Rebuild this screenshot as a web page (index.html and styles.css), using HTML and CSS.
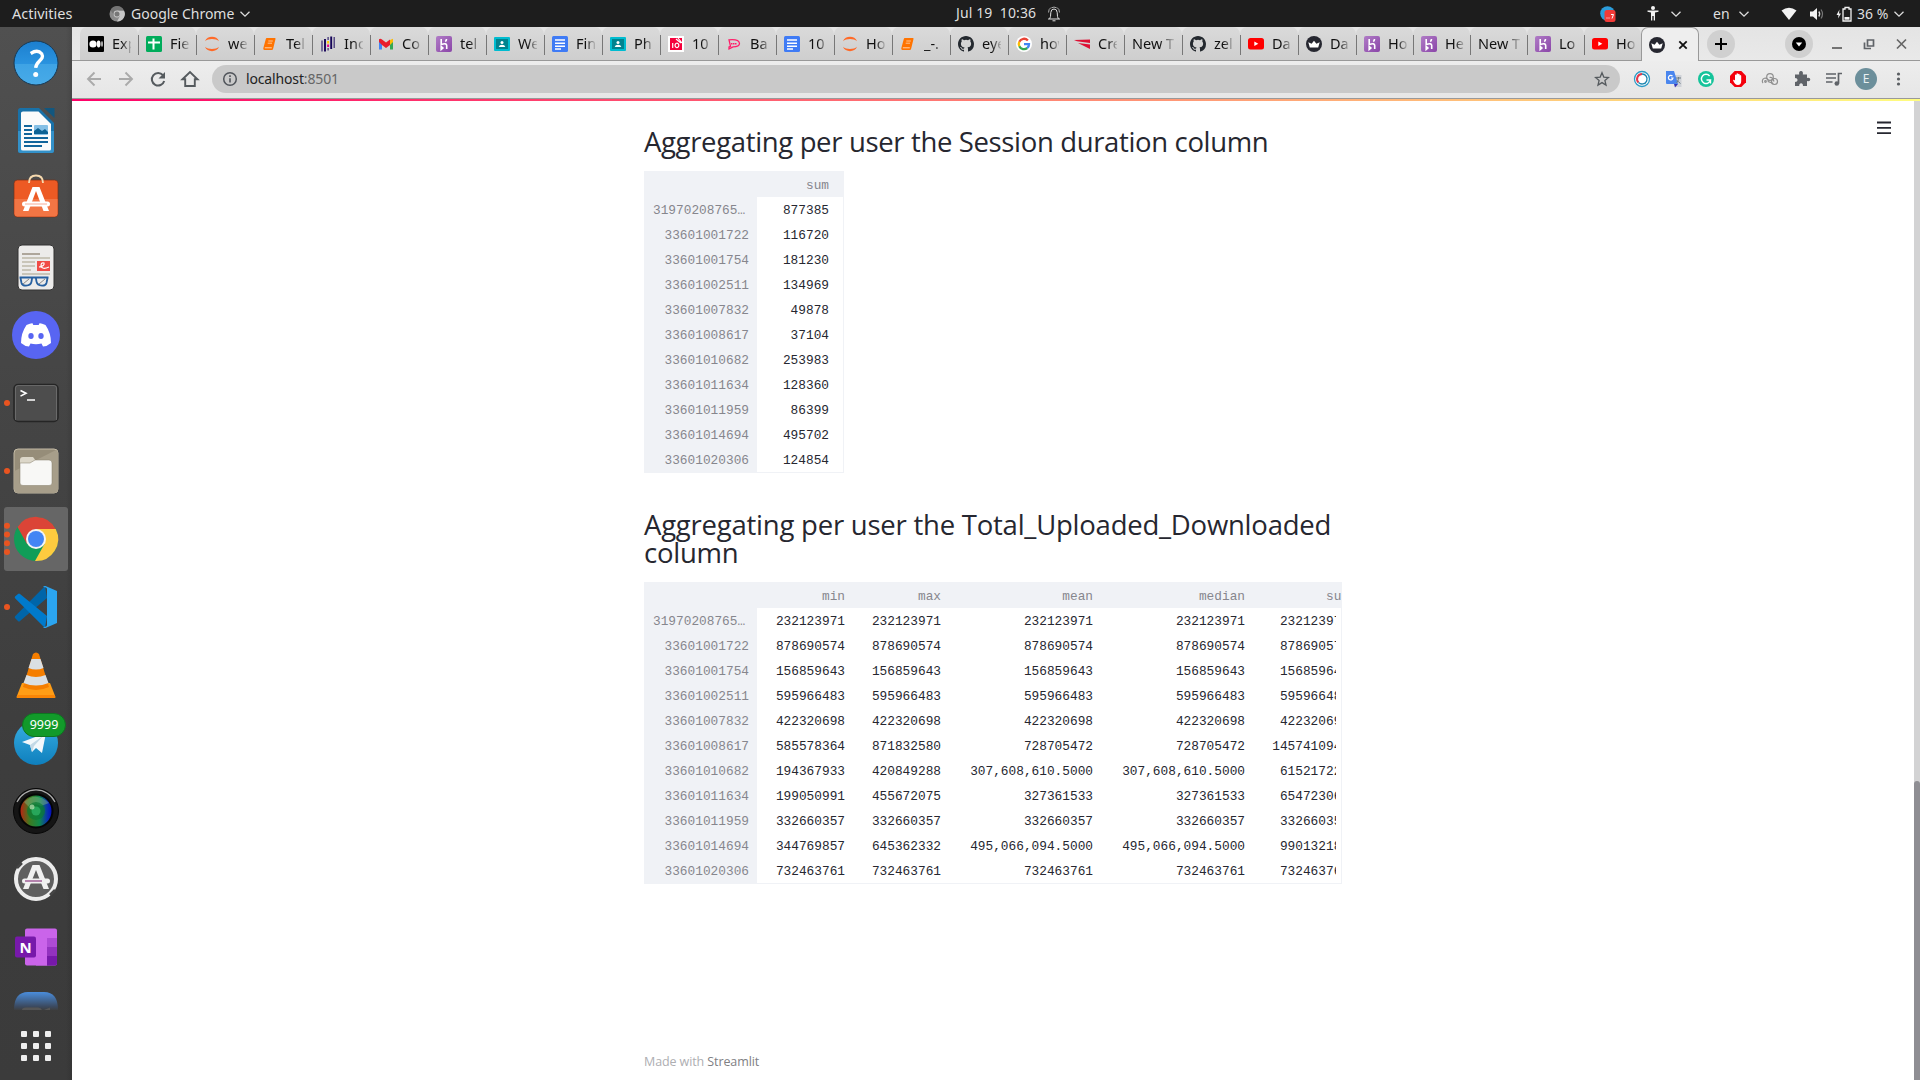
FILE: index.html
```html
<!DOCTYPE html>
<html lang="en">
<head>
<meta charset="utf-8">
<title>Streamlit</title>
<link rel="stylesheet" href="styles.css">
</head>
<body>
<svg class="defs" aria-hidden="true">
  <defs>
    <linearGradient id="blueV" x1="0" y1="0" x2="0" y2="1"><stop offset="0" stop-color="#1c7fcf"/><stop offset=".52" stop-color="#2a93df"/><stop offset=".53" stop-color="#3ea3e5"/><stop offset="1" stop-color="#48abe8"/></linearGradient>
    <linearGradient id="tele" x1="0" y1="0" x2="0" y2="1"><stop offset="0" stop-color="#37aee2"/><stop offset="1" stop-color="#0f7fbd"/></linearGradient>
    <linearGradient id="herokuG" x1="0" y1="0" x2="1" y2="1"><stop offset="0" stop-color="#b07cc6"/><stop offset="1" stop-color="#8a45a8"/></linearGradient>
    <linearGradient id="zoomG" x1="0" y1="0" x2="0" y2="1"><stop offset="0" stop-color="#4a8ddc"/><stop offset=".8" stop-color="#3b4a60"/><stop offset="1" stop-color="#3e3f41"/></linearGradient>
    <linearGradient id="lensG" x1="0" y1="0" x2="1" y2="0"><stop offset="0" stop-color="#c81a10"/><stop offset=".3" stop-color="#3f7a20"/><stop offset=".6" stop-color="#0f8a4a"/><stop offset=".85" stop-color="#0a2fb0"/><stop offset="1" stop-color="#0608c0"/></linearGradient>
  </defs>
  <symbol id="medium" viewBox="0 0 16 16"><rect width="16" height="16" rx="1"/><circle cx="5" cy="8" r="3.6" fill="#fff"/><ellipse cx="10.6" cy="8" rx="1.9" ry="3.4" fill="#fff"/><ellipse cx="14" cy="8" rx=".7" ry="3" fill="#fff"/></symbol>
  <symbol id="sheets" viewBox="0 0 16 16"><rect width="16" height="16" rx="1.5" fill="#00ac5b"/><path d="M2 6.5h12M7.5 2.5v11" stroke="#fff" stroke-width="2"/></symbol>
  <symbol id="jupyter" viewBox="0 0 16 16"><path d="M1 5.2C3 -.6 13 -.6 15 5.2C12 2.3 4 2.3 1 5.2ZM1 10.8C3 16.6 13 16.6 15 10.8C12 13.7 4 13.7 1 10.8Z" fill="#ff6a28"/></symbol>
  <symbol id="book" viewBox="0 0 16 16"><path d="M4.800 2h8q1 0 .7 1l-2.300 9.500q-.3 1.500-1.500 1.500H2.500Q1 14 1.300 12.300L3.800 3Q4 2 4.800 2Z" fill="#ff7300"/><path d="M6.300 5h4.500M5.700 7.200h4.300" fill="none" stroke="#ffd9b8" stroke-width=".8"/><path d="M2.800 11.800h7" stroke="#ffe8d4" stroke-width=".8"/></symbol>
  <symbol id="pandas" viewBox="0 0 16 16"><path d="M5 3v12.500M11.200 .5V13" stroke="#150458" stroke-width="1.900"/><path d="M8.100 1v3M8.100 12v2.500M2 4.500v11M14.200 1v11" stroke="#46387a" stroke-width="1.300"/><path d="M8.100 5v2.500" stroke="#ffca00" stroke-width="2"/><path d="M8.100 8.500V11" stroke="#e70488" stroke-width="2"/></symbol>
  <symbol id="gmail" viewBox="0 0 16 16"><path d="M1 4v9.500h3V6Z" fill="#4285f4"/><path d="M12 6v7.500h3V4Z" fill="#34a853"/><path d="M12 4l3-1.200V6l-3 3Z" fill="#fbbc04"/><path d="M1 6V3.200q1.500-1.200 3 .2L8 6.500l4-3.100V9l-4 3-4-3Z" fill="#ea1d2c"/></symbol>
  <symbol id="heroku" viewBox="0 0 16 16"><rect width="16" height="16" rx="2" fill="url(#herokuG)"/><path d="M5.200 3v5.500q5.500-1.800 5.500 1V13M10.500 3q0 1.500-1.200 2.600M5.200 10.500v3l1.700-1.500Z" fill="none" stroke="#fff" stroke-width="1.600"/></symbol>
  <symbol id="classroom" viewBox="0 0 16 16"><rect y="1" width="16" height="14" rx="1" fill="#00bcd0"/><rect x="2" y="3" width="12" height="10" fill="#00838f"/><circle cx="8" cy="6.500" r="1.500" fill="#fff"/><path d="M4.700 11q.5-2.300 3.300-2.300t3.300 2.300Z" fill="#fff"/></symbol>
  <symbol id="docs" viewBox="0 0 16 16"><rect width="16" height="16" rx="1.500" fill="#3f7bf5"/><path d="M3 4h10M3 7.300h10M3 10.300h10M3 13h6" stroke="#fff" stroke-width="1.500"/></symbol>
  <symbol id="ten" viewBox="0 0 16 16"><rect width="16" height="16" fill="#fff"/><rect x="2" y="2" width="12" height="12" fill="#f5003b"/><path d="M4.700 7v5M9 7.200a1.900 2.200 0 1 1-.1 0M8 3l5 4M10 2l4 5" fill="none" stroke="#fff" stroke-width="1.200"/></symbol>
  <symbol id="rasa" viewBox="0 0 16 16"><path d="M3 3.800q10-1 10.500 3.700-.2 3.400-6.500 3.400l-4 2V11l1.500-.7L3 3.800Z" fill="none" stroke="#ff1e6a" stroke-width="1.300"/><path d="M5 7.700h6" stroke="#ff1e6a" stroke-width="1.500" stroke-dasharray="1.500 .5"/></symbol>
  <symbol id="github" viewBox="0 0 16 16"><path fill="#24292f" d="M8 0C3.580 0 0 3.580 0 8c0 3.540 2.290 6.530 5.470 7.590.4.070.55-.17.55-.38 0-.19-.01-.82-.01-1.490-2.010.37-2.530-.49-2.690-.94-.09-.23-.48-.94-.82-1.130-.28-.15-.68-.52-.01-.53.63-.01 1.080.58 1.230.82.72 1.210 1.870.87 2.330.66.07-.52.28-.87.51-1.070-1.780-.2-3.640-.89-3.640-3.950 0-.87.31-1.590.82-2.150-.08-.2-.36-1.020.08-2.120 0 0 .67-.21 2.200.82a7.600 7.600 0 0 1 4 0c1.530-1.040 2.200-.82 2.200-.82.44 1.100.16 1.920.08 2.120.51.56.82 1.270.82 2.150 0 3.070-1.870 3.750-3.650 3.950.29.25.54.73.54 1.480 0 1.070-.01 1.930-.01 2.200 0 .21.15.46.55.38A8.010 8.010 0 0 0 16 8c0-4.420-3.580-8-8-8Z"/></symbol>
  <symbol id="google" viewBox="0 0 16 16"><circle cx="8" cy="8" r="8" fill="#fff"/><g fill="none" stroke-width="2.300"><path d="M11.900 4.500A5.200 5.200 0 0 0 3.300 5.800" stroke="#ea4335"/><path d="M3.300 5.800a5.200 5.200 0 0 0 0 4.400" stroke="#fbbc05"/><path d="M3.300 10.200a5.200 5.200 0 0 0 8 1.800" stroke="#34a853"/><path d="M11.300 12A5 5 0 0 0 13 8.200H8" stroke="#4285f4"/></g></symbol>
  <symbol id="creator" viewBox="0 0 16 16"><path d="M0 4l16-.5V7L3 5.300ZM4 7l12 1.500V13Z" fill="#dd1034"/></symbol>
  <symbol id="youtube" viewBox="0 0 16 16"><rect y="2" width="16" height="11.500" rx="2.500" fill="#f00"/><path d="M6.300 5.500v4.600l4-2.300Z" fill="#fff"/></symbol>
  <symbol id="crown" viewBox="0 0 16 16"><circle cx="8" cy="8" r="8" fill="#262730"/><path d="M2.300 6.200l3.300 1.500L8 4.700l2.400 3 3.300-1.500-1.500 5.200H3.800Z" fill="#fff"/></symbol>
  <symbol id="chev" viewBox="0 0 12 12"><path d="M1.500 3.800 6 8.200l4.500-4.400" fill="none" stroke="#dcdcdc" stroke-width="1.300"/></symbol>
</svg>

<header class="topbar">
  <span class="activities">Activities</span>
  <div class="app-menu">
    <svg width="16" height="16" viewBox="0 0 16 16"><circle cx="8" cy="8" r="7.500" fill="#8b8b8b"/><path d="M8 4.500h7A7.500 7.500 0 0 1 8 15.500l3-5.500Z" fill="#c8c8c8"/><path d="M1.500 4.200A7.500 7.500 0 0 1 15 4.500H8L5 9Z" fill="#747474"/><circle cx="8" cy="8" r="3.400" fill="#c9c9c9"/><circle cx="8" cy="8" r="2.500" fill="#777"/></svg>
    <span class="app-name">Google Chrome</span>
    <svg width="12" height="12"><use href="#chev"/></svg>
  </div>
  <div class="clock">
    <span>Jul 19&nbsp; 10:36</span>
    <svg width="14" height="16" viewBox="0 0 14 16" fill="none" stroke="#dedede"><path d="M1 13h12M2.600 13q1.200-2 1.200-6.500Q4 3 7 3t3.200 3.500q0 4.500 1.200 6.500M5.500 14.800h3"/><path d="M1.500 6.500Q1.500 3 4 1.500M12.500 6.500Q12.500 3 10 1.500M4.500 1.800Q7 .3 9.500 1.800" stroke="#aaa"/></svg>
  </div>
  <div class="tray">
    <svg class="t-app" width="16" height="16" viewBox="0 0 16 16"><circle cx="7.500" cy="7.500" r="7.300" fill="#2c9ddb"/><rect x="4.500" y="4" width="11" height="12" rx="2.500" fill="#f33a37"/><path d="M6.500 12h1M8.500 12h1M11 8.500h2.500l-1.500 4" fill="none" stroke="#fff"/></svg>
    <svg class="t-person" width="12" height="15" viewBox="0 0 12 15"><circle cx="6" cy="2" r="2" fill="#f2f2f2"/><path d="M.5 4.500h11v1.300l-3.500.8V14.500H6.700V10H5.300v4.500H4V6.600L.5 5.800Z" fill="#f2f2f2"/></svg>
    <svg class="t-chev1" width="12" height="12"><use href="#chev"/></svg>
    <span class="t-lang">en</span>
    <svg class="t-chev2" width="12" height="12"><use href="#chev"/></svg>
    <svg class="t-wifi" width="16" height="14" viewBox="0 0 16 14"><path d="M.5 3.500Q8-2 15.500 3.500L8 13Z" fill="#f2f2f2"/></svg>
    <svg class="t-vol" width="16" height="14" viewBox="0 0 16 14"><path d="M1 4.500h3L8 1v12L4 9.500H1Z" fill="#f2f2f2"/><path d="M9.800 4.500q1.800 2.500 0 5" fill="none" stroke="#ddd" stroke-width="1.300"/><path d="M12 2.500q3 4.500 0 9" fill="none" stroke="#777" stroke-width="1.200"/></svg>
    <svg class="t-bat" width="16" height="16" viewBox="0 0 16 16"><path d="M3.500 3.500.5 9h2L2 12.500 5 7.500H3Z" fill="#f2f2f2"/><path d="M7 3h2V1.500h4V3h2v12H7Z" fill="none" stroke="#f2f2f2" stroke-width="1.300"/><path d="M8.500 11h5v2.700h-5Z" fill="#f2f2f2"/></svg>
    <span class="t-pct">36 %</span>
    <svg class="t-chev3" width="12" height="12"><use href="#chev"/></svg>
  </div>
</header>

<div class="desktop">
  <nav class="dock">
    <svg width="72" height="68"><circle cx="36" cy="34" r="22" fill="url(#blueV)" stroke="#173a56"/><path d="M30.700 24.500q7-4.500 11 .3c3.300 6-5.500 6.700-6 14" fill="none" stroke="#fff" stroke-width="3.300"/><circle cx="35.700" cy="45.500" r="2.500" fill="#fff"/></svg>
    <svg width="72" height="68"><path d="M20.500 11H39L54 26v27.500q0 2.500-2.500 2.500h-31Q18 56 18 53.500v-40Q18 11 20.500 11Z" fill="#1971a8"/><path d="M18 34h36v19.500q0 2.500-2.500 2.500h-31Q18 56 18 53.500Z" fill="#3391c9"/><path d="M23 14.500h15.500L51 27v25q0 1.500-1.500 1.500H23Q21 53.500 21 52V16q0-1.500 2-1.500Z" fill="#fbfbfb"/><path d="M44 11h10.500v10Z" fill="#12577f"/><rect x="34" y="28" width="14" height="10" rx="1" fill="#86c0e6"/><path d="M34 37v-3l4-3 4 3 3-2 3 3v2Z" fill="#0f6394"/><path d="M24 29h8M24 33h8M24 37h8M24 41h24M24 45h24M24 49h18" stroke="#12659b" stroke-width="2"/></svg>
    <svg width="72" height="68"><rect x="14" y="15" width="44" height="37" rx="3.500" fill="#ed5a24" stroke="#74321b" stroke-width=".7"/><path d="M14.500 34h43v14.500q0 3-3 3h-37q-3 0-3-3Z" fill="#f27544"/><path d="M29 18q0-7.500 7-7.500t7 7.500" fill="none" stroke="#f6d9ae" stroke-width="1.800"/><path d="M32.500 22h7L49 46h-5.500L36 26 28.500 46H23Z" fill="#fff"/><rect x="22" y="36.500" width="28" height="5" rx="2.500" fill="#fff"/><path d="M25 39h22" stroke="#f6aa94"/></svg>
    <svg width="72" height="68"><rect x="18" y="12" width="36" height="45" rx="4" fill="#ecebea" stroke="#333"/><path d="M22 21h18" stroke="#aea69b" stroke-width="2"/><path d="M22 25h28M22 29h13M22 33h13M22 37h9M22 41h28" stroke="#c9c5b9" stroke-width="1.800"/><rect x="37" y="28" width="13" height="10" fill="#f04b46"/><path d="M39 34q6-1 5-4-3-1-3 3 1 4 8 1" fill="none" stroke="#fff" stroke-width="1.200"/><path d="M19.500 44.500h29M20.500 45l1 5q.8 2.800 4.500 2.700 5-.3 5.500-4l.7-4.200M47.500 45l-1 5q-.8 2.800-4.500 2.700-4.800-.3-5.500-4l-.7-4.200" fill="none" stroke="#2760a0" stroke-width="1.800"/><path d="M23 51l6-5M39 51l6-5" stroke="#888"/></svg>
    <svg width="72" height="68"><circle cx="36" cy="34" r="24" fill="#5865f2"/><path d="M26.500 24q4.500-2 6-1.700l.8 1.700h5.400l.8-1.700q1.500-.3 6 1.700 5.500 8 5.500 18-4 3.500-8 3.500l-1.500-3q-5.500 1.500-11 0l-1.500 3q-4 0-8-3.500 0-10 5.500-18Z" fill="#fff"/><ellipse cx="31" cy="35" rx="2.700" ry="3" fill="#5865f2"/><ellipse cx="41" cy="35" rx="2.700" ry="3" fill="#5865f2"/></svg>
    <svg width="72" height="68"><circle cx="7" cy="34" r="3" fill="#e95420"/><rect x="14" y="15.500" width="44" height="37" rx="4" fill="#4d4d4d" stroke="#252525" stroke-width="1.500"/><path d="M15.500 51V19q0-2.500 2.500-2.500h36q2.500 0 2.500 2.500v32" fill="none" stroke="#777" stroke-width=".7"/><path d="m20.500 21.500 5.500 2.800-5.500 2.800M27 31h8" fill="none" stroke="#fff" stroke-width="1.600"/></svg>
    <svg width="72" height="68"><circle cx="7" cy="34" r="3" fill="#e95420"/><rect x="14" y="12" width="44" height="44" rx="4" fill="#968d79" stroke="#c4bba6"/><path d="M14.500 34 56 13q2 1 2 3v36q0 4-4 4H18q-3.500 0-3.500-4Z" fill="#a79e8a"/><path d="M20 39V23q0-3 3-3h10l3 4-3 4Z" fill="#dcd7c9"/><path d="M20 26h10l5-3h14q3 0 3 3v20q0 2.500-3 2.500H23Q20 48.500 20 46Z" fill="#f8f8f6" stroke="#857c68" stroke-width=".5"/></svg>
    <svg width="72" height="68"><rect x="4" y="2" width="64" height="64" rx="3" fill="#666"/><g fill="#e95420"><circle cx="7" cy="20.700" r="3"/><circle cx="7" cy="29.500" r="3"/><circle cx="7" cy="38.300" r="3"/><circle cx="7" cy="47" r="3"/></g><circle cx="36" cy="34" r="22" fill="#109d58"/><path d="M36 24h19.700A22 22 0 0 1 35 56l9.500-17Z" fill="#fdcb3f"/><path d="M17.500 22A22 22 0 0 1 55.700 24H36l-9 15Z" fill="#db4437"/><circle cx="36" cy="34" r="10" fill="#f4f4f4"/><circle cx="36" cy="34" r="8" fill="#4285f4"/></svg>
    <svg width="72" height="68"><circle cx="7" cy="34" r="3" fill="#e95420"/><path d="m45 13 2 12-27 23q-1 1-2 0l-3-3q-.7-1 .3-2Z" fill="#0065a9"/><path d="m45 55 2-12-27-22q-1-1-2 0l-3 2.500q-.7 1 .3 2Z" fill="#007acc"/><path d="m45.500 13 11.500 5v32l-11.500 5q-1.500.3-2.500-1 4 0 4-2V16q0-2-4-2 1-1.300 2.500-1Z" fill="#2ba5f0"/></svg>
    <svg width="72" height="68"><path d="M22 42h28l5.500 14q0 1-1 1h-37q-1 0-1-1Z" fill="#ff9d16"/><path d="M17 54h38v3H17Z" fill="#f98506"/><path d="M33 13q3-3 6 0l10 33q-13 6-26 0Z" fill="#f57e00"/><path d="m31.500 18 9 0 3 9q-7.500 3-15 0ZM26.500 34q9.500 4 19 0l3 8q-12.500 5-25 0Z" fill="#dadfe3"/></svg>
    <div class="tile-badged"><svg width="72" height="68"><circle cx="36" cy="34" r="22" fill="url(#tele)"/><path d="m22 33 24-9-4 20-6-5-4 4-2-7Z" fill="#f3f8fb"/><path d="m30 36 13-9-9 10-2 6Z" fill="#c3d9e6"/></svg><span class="badge">9999</span></div>
    <svg width="72" height="68"><circle cx="36" cy="34" r="22.500" fill="#151515" stroke="#060606"/><path d="M17 25a21 21 0 0 1 38 0" fill="none" stroke="#aaa" stroke-width="1.200"/><circle cx="36" cy="34" r="16.500" fill="url(#lensG)" stroke="#050505" stroke-width="2"/><path d="M24 25q12-11 25 1l-8 3q-7-4-12 1Z" fill="#86b98a" opacity=".45"/><circle cx="36" cy="34" r="9" fill="#0c7a35" opacity=".7"/><circle cx="36" cy="34" r="4.500" fill="#27a65a"/><circle cx="32" cy="30" r="2.500" fill="#bfe6b8" opacity=".7"/></svg>
    <svg width="72" height="68"><circle cx="36" cy="34" r="20" fill="#5f5f5f" stroke="#ececec" stroke-width="4"/><path d="m17 23 5-5M50 50l5-5" stroke="#454545" stroke-width="2.500"/><path d="M32.500 20h7L49 44h-5.500L36 25 28.500 44H23Z" fill="#f0f0f0"/><rect x="22" y="33.500" width="28" height="5" rx="2.500" fill="#f0f0f0"/><path d="M25 36h17" stroke="#8c3a80" stroke-width="1.200"/></svg>
    <svg width="72" height="68"><rect x="25" y="15.500" width="32" height="37" rx="2" fill="#ca64ea"/><path d="M47 25h10v9H47Z" fill="#ae4bd5"/><path d="M47 34h10v9H47Z" fill="#9332bf"/><path d="M36 43h21v7.500q0 2-2 2H47V43Z" fill="#7719aa"/><path d="M36 43h11v9.500H36Z" fill="#ca64ea"/><rect x="15" y="23.500" width="21" height="21" rx="2" fill="#7719aa"/><text x="25.500" y="39.500" text-anchor="middle" class="onenote">N</text></svg>
    <svg width="72" height="30"><path d="M14 29q0-18 14-18h16q14 0 14 18Z" fill="url(#zoomG)"/><path d="M22 29q0-2.500 4-2.500h12q3 0 4 2.500ZM44 29l6-2.500v2.500Z" fill="#555"/></svg>
    <svg width="72" height="69"><g fill="#eee"><rect x="21" y="20" width="6" height="6" rx="1"/><rect x="33" y="20" width="6" height="6" rx="1"/><rect x="45" y="20" width="6" height="6" rx="1"/><rect x="21" y="32" width="6" height="6" rx="1"/><rect x="33" y="32" width="6" height="6" rx="1"/><rect x="45" y="32" width="6" height="6" rx="1"/><rect x="21" y="44" width="6" height="6" rx="1"/><rect x="33" y="44" width="6" height="6" rx="1"/><rect x="45" y="44" width="6" height="6" rx="1"/></g></svg>
  </nav>

  <main class="window">
    <div class="tabstrip">
      <div class="tab"><svg><use href="#medium"/></svg><span>Exp</span></div>
      <div class="tab"><svg><use href="#sheets"/></svg><span>Fie</span></div>
      <div class="tab"><svg><use href="#jupyter"/></svg><span>we</span></div>
      <div class="tab"><svg><use href="#book"/></svg><span>Tel</span></div>
      <div class="tab"><svg><use href="#pandas"/></svg><span>Inc</span></div>
      <div class="tab"><svg><use href="#gmail"/></svg><span>Co</span></div>
      <div class="tab"><svg><use href="#heroku"/></svg><span>tel</span></div>
      <div class="tab"><svg><use href="#classroom"/></svg><span>We</span></div>
      <div class="tab"><svg><use href="#docs"/></svg><span>Fin</span></div>
      <div class="tab"><svg><use href="#classroom"/></svg><span>Ph</span></div>
      <div class="tab"><svg><use href="#ten"/></svg><span>10</span></div>
      <div class="tab"><svg><use href="#rasa"/></svg><span>Ba</span></div>
      <div class="tab"><svg><use href="#docs"/></svg><span>10</span></div>
      <div class="tab"><svg><use href="#jupyter"/></svg><span>Ho</span></div>
      <div class="tab"><svg><use href="#book"/></svg><span>_-.</span></div>
      <div class="tab"><svg><use href="#github"/></svg><span>eye</span></div>
      <div class="tab"><svg><use href="#google"/></svg><span>how</span></div>
      <div class="tab"><svg><use href="#creator"/></svg><span>Cre</span></div>
      <div class="tab"><span class="wide">New T</span></div>
      <div class="tab"><svg><use href="#github"/></svg><span>zel</span></div>
      <div class="tab"><svg><use href="#youtube"/></svg><span>Da</span></div>
      <div class="tab"><svg><use href="#crown"/></svg><span>Da</span></div>
      <div class="tab slim"><svg><use href="#heroku"/></svg><span>Ho</span></div>
      <div class="tab slim"><svg><use href="#heroku"/></svg><span>He</span></div>
      <div class="tab slim"><span class="wide">New T</span></div>
      <div class="tab slim"><svg><use href="#heroku"/></svg><span>Lo</span></div>
      <div class="tab slim"><svg><use href="#youtube"/></svg><span>Ho</span></div>
      <div class="tab active"><svg><use href="#crown"/></svg><svg class="close" viewBox="0 0 10 10"><path d="m1.300 1.300 7.400 7.400m0-7.400L1.300 8.700" stroke="#111" stroke-width="1.800"/></svg></div>
      <div class="round"><svg width="12" height="12"><path d="M6 0v12M0 6h12" stroke="#000" stroke-width="2"/></svg></div>
      <div class="controls">
        <div class="round"><svg width="14" height="14"><circle cx="7" cy="7" r="7"/><path d="M3.800 5.500h6.400L7 9.500Z" fill="#fff"/></svg></div>
        <svg class="ctl" viewBox="0 0 32 28"><path d="M11 18h10" stroke="#666" stroke-width="1.800"/></svg>
        <svg class="ctl" viewBox="0 0 32 28" fill="none" stroke="#5f6368" stroke-width="1.700"><path d="M14.500 10H20.500v6H14.500ZM11.500 12.500v6h6.500"/></svg>
        <svg class="ctl" viewBox="0 0 32 28"><path d="m12 9.500 9 9m0-9-9 9" stroke="#666" stroke-width="1.700"/></svg>
      </div>
    </div>

    <div class="toolbar">
      <svg class="btn" viewBox="0 0 32 32"><path d="M23 16H10m6.500-6.500L10 16l6.500 6.500" fill="none" stroke="#aaa" stroke-width="1.900"/></svg>
      <svg class="btn" viewBox="0 0 32 32"><path d="M9 16h13m-6.500-6.500L22 16l-6.500 6.500" fill="none" stroke="#aaa" stroke-width="1.900"/></svg>
      <svg class="btn" viewBox="0 0 32 32"><path d="M21 12.200A6.300 6.300 0 1 0 22.200 18" fill="none" stroke="#555a5e" stroke-width="2"/><path d="M23 9v6.500h-6.500Z" fill="#555a5e"/></svg>
      <svg class="btn" viewBox="0 0 32 32"><path d="M8.500 16.300 16 9l7.500 7.300h-2.700V23h-9.600v-6.700Z" fill="none" stroke="#555a5e" stroke-width="1.900"/></svg>
      <div class="omnibox">
        <svg width="16" height="16" viewBox="0 0 16 16"><circle cx="8" cy="8" r="6.300" fill="none" stroke="#50545a" stroke-width="1.500"/><path d="M8 7.200V11.500M8 4.300V6" stroke="#50545a" stroke-width="1.600"/></svg>
        <span class="url">localhost<i>:8501</i></span>
        <svg class="star" width="16" height="16" viewBox="0 0 16 16"><path d="m8 1.800 1.800 4.300 4.700.4-3.600 3 1.100 4.600-4-2.500-4 2.500 1.100-4.600-3.600-3 4.700-.4Z" fill="none" stroke="#555a5e" stroke-width="1.300"/></svg>
      </div>
      <svg class="btn" viewBox="0 0 32 32"><circle cx="16" cy="16" r="7.500" fill="#fff" stroke="#2b9bc7" stroke-width="1.300"/><path d="M16 11a5 5 0 0 0-3.500 8.500" fill="none" stroke="#e23a4c" stroke-width="2"/><path d="M16 11a5 5 0 1 1-3.500 8.500" fill="none" stroke="#1c84ae" stroke-width="1.400"/></svg>
      <svg class="btn" viewBox="0 0 32 32"><path d="M14 12h9.500v12H18Z" fill="#cfd2d8"/><path d="M8 8h8l4 13H9q-1 0-1-1Z" fill="#4a86ee"/><path d="M16 21h4l-3 3.500Z" fill="#3735b4"/><path d="M14.500 13.200A2.300 2.300 0 1 0 15 15h-2" fill="none" stroke="#fff" stroke-width="1.200"/><path d="M18 15h5M20.500 14v1q0 3-2 5m0-3 4 3.500" fill="none" stroke="#6f7f85"/></svg>
      <svg class="btn" viewBox="0 0 32 32"><circle cx="16" cy="16" r="8" fill="#15c39a"/><path d="M19.600 13A4.600 4.600 0 1 0 20.500 17h-4m4 0v3.500" fill="none" stroke="#fff" stroke-width="1.400"/></svg>
      <svg class="btn" viewBox="0 0 32 32"><path d="M12.700 8h6.600L24 12.700v6.600L19.300 24h-6.600L8 19.300v-6.600Z" fill="#f4000c"/><path d="M13 17.500V12q.8-1 1.500 0v-1.300q.8-1 1.600 0v.5q1-.9 1.600.2v1q1-.8 1.500.3V18q0 4-3.300 4t-4.900-5q.8-.7 2 .5Z" fill="#fff"/></svg>
      <svg class="btn" viewBox="0 0 32 32" fill="none" stroke="#8f8f8f" stroke-width="1.200"><circle cx="16" cy="14" r="3.300"/><circle cx="20.500" cy="18.500" r="3"/><path d="M9 20a3 3 0 1 1 5.300-1.500l5 2M15.500 14.500q3-1 4.500 4"/><circle cx="11.500" cy="18.500" r=".8"/></svg>
      <svg class="btn" viewBox="0 0 32 32"><path d="M9 11.500h4.200q-.7-3.500 1.800-3.500t1.800 3.500H21V15q3.300-.6 3.300 1.500T21 18v5h-4q0-2.800-1.900-2.800T13.200 23H9v-4q2.600 0 2.600-2T9 15Z" fill="#5f6368"/></svg>
      <svg class="btn" viewBox="0 0 32 32"><path d="M8 11h10M8 15h10M8 19h6.500M20.500 20.500V10.500h3.500" fill="none" stroke="#5f6368" stroke-width="1.700"/><circle cx="18.800" cy="20.500" r="2.300" fill="#5f6368"/></svg>
      <div class="btn"><span class="avatar">E</span></div>
      <svg class="btn" viewBox="0 0 32 32" fill="#5a5e62"><circle cx="16.500" cy="11" r="1.600"/><circle cx="16.500" cy="16" r="1.600"/><circle cx="16.500" cy="21" r="1.600"/></svg>
    </div>

    <div class="page">
      <div class="decoration"></div>
      <div class="scroll-body">
        <div class="content">
          <h2 class="h-one">Aggregating per user the Session duration column</h2>
          <div class="frame narrow">
            <div class="head"><div class="idx"></div><div class="c-a">sum</div></div>
            <div class="rows">
              <div class="row"><div class="idx cut">31970208765…</div><div class="c-a">877385</div></div>
              <div class="row"><div class="idx">33601001722</div><div class="c-a">116720</div></div>
              <div class="row"><div class="idx">33601001754</div><div class="c-a">181230</div></div>
              <div class="row"><div class="idx">33601002511</div><div class="c-a">134969</div></div>
              <div class="row"><div class="idx">33601007832</div><div class="c-a">49878</div></div>
              <div class="row"><div class="idx">33601008617</div><div class="c-a">37104</div></div>
              <div class="row"><div class="idx">33601010682</div><div class="c-a">253983</div></div>
              <div class="row"><div class="idx">33601011634</div><div class="c-a">128360</div></div>
              <div class="row"><div class="idx">33601011959</div><div class="c-a">86399</div></div>
              <div class="row"><div class="idx">33601014694</div><div class="c-a">495702</div></div>
              <div class="row"><div class="idx">33601020306</div><div class="c-a">124854</div></div>
            </div>
          </div>
          <h2 class="h-two">Aggregating per user the Total_Uploaded_Downloaded<br>column</h2>
          <div class="frame">
            <div class="head"><div class="idx"></div><div class="c-min">min</div><div class="c-max">max</div><div class="c-mid">mean</div><div class="c-mid">median</div><div class="c-sum">sum</div></div>
            <div class="rows clipped">
              <div class="row"><div class="idx cut">31970208765…</div><div class="c-min">232123971</div><div class="c-max">232123971</div><div class="c-mid">232123971</div><div class="c-mid">232123971</div><div class="c-sum">232123971</div></div>
              <div class="row"><div class="idx">33601001722</div><div class="c-min">878690574</div><div class="c-max">878690574</div><div class="c-mid">878690574</div><div class="c-mid">878690574</div><div class="c-sum">878690574</div></div>
              <div class="row"><div class="idx">33601001754</div><div class="c-min">156859643</div><div class="c-max">156859643</div><div class="c-mid">156859643</div><div class="c-mid">156859643</div><div class="c-sum">156859643</div></div>
              <div class="row"><div class="idx">33601002511</div><div class="c-min">595966483</div><div class="c-max">595966483</div><div class="c-mid">595966483</div><div class="c-mid">595966483</div><div class="c-sum">595966483</div></div>
              <div class="row"><div class="idx">33601007832</div><div class="c-min">422320698</div><div class="c-max">422320698</div><div class="c-mid">422320698</div><div class="c-mid">422320698</div><div class="c-sum">422320698</div></div>
              <div class="row"><div class="idx">33601008617</div><div class="c-min">585578364</div><div class="c-max">871832580</div><div class="c-mid">728705472</div><div class="c-mid">728705472</div><div class="c-sum">1457410944</div></div>
              <div class="row"><div class="idx">33601010682</div><div class="c-min">194367933</div><div class="c-max">420849288</div><div class="c-mid">307,608,610.5000</div><div class="c-mid">307,608,610.5000</div><div class="c-sum">615217221</div></div>
              <div class="row"><div class="idx">33601011634</div><div class="c-min">199050991</div><div class="c-max">455672075</div><div class="c-mid">327361533</div><div class="c-mid">327361533</div><div class="c-sum">654723066</div></div>
              <div class="row"><div class="idx">33601011959</div><div class="c-min">332660357</div><div class="c-max">332660357</div><div class="c-mid">332660357</div><div class="c-mid">332660357</div><div class="c-sum">332660357</div></div>
              <div class="row"><div class="idx">33601014694</div><div class="c-min">344769857</div><div class="c-max">645362332</div><div class="c-mid">495,066,094.5000</div><div class="c-mid">495,066,094.5000</div><div class="c-sum">990132189</div></div>
              <div class="row"><div class="idx">33601020306</div><div class="c-min">732463761</div><div class="c-max">732463761</div><div class="c-mid">732463761</div><div class="c-mid">732463761</div><div class="c-sum">732463761</div></div>
            </div>
          </div>
          <footer>Made with <b>Streamlit</b></footer>
        </div>
        <svg class="burger" width="14" height="14"><path d="M0 1.500h14M0 6.800h14M0 12.200h14" stroke="#262730" stroke-width="1.800"/></svg>
        <div class="scrollbar"><div class="thumb"></div></div>
      </div>
    </div>
  </main>
</div>
</body>
</html>
```

FILE: styles.css
```css
* { box-sizing: border-box; }
body { margin: 0; width: 1920px; height: 1080px; overflow: hidden; background: #fff; font-family: "Noto Sans", sans-serif; }
svg { display: block; flex: none; }
.defs { position: absolute; width: 0; height: 0; }

.topbar { display: grid; grid-template-columns: 956px 640px 1fr; height: 27px; background: #1d1d1d; color: #dfdfdf; font-size: 14px; line-height: 27px; white-space: nowrap; grid-template-areas: "left mid right"; }
.activities { grid-area: left; width: 80px; padding-left: 12px; font-size: 14.500px; letter-spacing: 0; }
.app-menu { grid-area: left; display: flex; align-items: center; padding-left: 109px; width: 300px; }
.app-name { width: 109px; padding-left: 6px; }
.app-menu svg:last-child { margin-left: 5px; }
.clock { grid-area: mid; display: flex; align-items: center; }
.clock span { width: 91px; line-height: 25px; height: 27px; letter-spacing: .1px; }
.tray { grid-area: right; display: flex; align-items: center; }
.t-app { margin-left: 4px; }
.t-person { margin-left: 31px; }
.t-chev1 { margin-left: 11px; }
.t-lang { width: 25px; margin-left: 31px; }
.t-wifi { margin-left: 31px; }
.t-vol { margin-left: 12px; }
.t-bat { margin-left: 11px; }
.t-pct { width: 36px; margin-left: 5px; }

.desktop { display: flex; height: 1053px; }
.dock { flex: none; width: 72px; padding-top: 2px; background: linear-gradient(90deg, transparent 66px, rgba(0,0,0,.1)), linear-gradient(#505050, #454545 35%, #3d3d3d 70%, #3b3b3b); }
.tile-badged { position: relative; }
.badge { position: absolute; left: 22px; top: 4px; width: 44px; height: 24px; border-radius: 12px; background: #129a2a; border: 1px solid #0e7420; color: #fff; font-size: 12.500px; line-height: 22px; text-align: center; }
.onenote { font: bold 15px "Open Sans", sans-serif; fill: #fff; }

.window { width: 1848px; display: flex; flex-direction: column; }
.tabstrip { display: flex; align-items: stretch; height: 34px; padding-left: 8px; background: linear-gradient(#e4e4e4, #e9e9e9); box-shadow: inset 0 -1px #999; }
.tab { position: relative; flex: none; display: flex; align-items: center; width: 58px; height: 33px; padding: 1px 0 0 8px; border-radius: 7px 7px 0 0; background: linear-gradient(#dadada, #cecece); font-size: 14.500px; color: #111; }
.tab + .tab::before { content: ""; position: absolute; left: 0; top: 8px; width: 1px; height: 20px; background: #777; }
.tab svg { width: 16px; height: 16px; }
.tab span { width: 19px; margin: -2px 0 0 8px; overflow: hidden; white-space: nowrap; -webkit-mask-image: linear-gradient(90deg, #000 50%, rgba(0,0,0,.15)); mask-image: linear-gradient(90deg, #000 50%, rgba(0,0,0,.15)); }
.tab span.wide { width: 42px; margin-left: 0; -webkit-mask-image: linear-gradient(90deg, #000 65%, rgba(0,0,0,.15)); mask-image: linear-gradient(90deg, #000 65%, rgba(0,0,0,.15)); }
.tab.slim { width: 57px; }
.tab.active { width: 58px; height: 34px; background: #eee; border: 1px solid #999; border-bottom: 0; padding-left: 7px; }
.tab + .tab.active::before { display: none; }
.tab .close { width: 10px; height: 10px; margin-left: 13px; }
.round { flex: none; display: flex; align-items: center; justify-content: center; align-self: center; width: 28px; height: 28px; margin-left: 8px; border-radius: 50%; background: #d0d0d0; }
.controls { display: flex; align-items: center; margin-left: 50px; }
.controls .round { margin: 0 8px 0 0; }
.ctl { width: 32px; height: 28px; }

.toolbar { display: flex; align-items: center; height: 38px; padding: 0 6px 1px; background: linear-gradient(#ededed, #e6e6e6); border-bottom: 1px solid #999; }
.btn { flex: none; width: 32px; height: 32px; display: flex; align-items: center; justify-content: center; }
.omnibox { flex: none; display: flex; align-items: center; width: 1408px; height: 28px; margin: 0 6px; padding: 0 10px; border-radius: 14px; background: #c9c9c9; }
.url { flex: 1; margin: -1px 0 0 8px; font-size: 14px; letter-spacing: -.15px; color: #222; }
.url i { font-style: normal; color: #666; }
.avatar { width: 22px; height: 22px; border-radius: 50%; background: #6c8f9b; color: #e9f0f2; font-size: 12px; line-height: 22px; text-align: center; }

.page { flex: 1; display: flex; flex-direction: column; background: #fff; }
.decoration { height: 2px; background: linear-gradient(90deg, #ff0068, #ff8074 50%, #fffd80); }
.scroll-body { flex: 1; display: flex; color: #262730; }
.content { display: flex; flex-direction: column; width: 698px; margin-left: 572px; }
h2 { margin: 0; font: 400 27.500px/28px "Open Sans", sans-serif; white-space: nowrap; }
.h-one { margin-top: 27px; letter-spacing: -.35px; }
.h-two { margin-top: 38px; letter-spacing: -.23px; }
.frame { width: 698px; height: 302px; border: 1px solid #f0f2f6; font: 12.800px/27px "Liberation Mono", monospace; overflow: hidden; }
.h-one + .frame { margin-top: 15px; }
.h-two + .frame { margin-top: 15px; }
.frame.narrow { width: 200px; }
.head, .row { display: flex; height: 25px; }
.head { background: #f0f2f6; color: #86868d; }
.rows { overflow: hidden; }
.rows.clipped { width: 691px; }
.head div, .row div { flex: none; height: 25px; text-align: right; padding-right: 14px; }
.row .idx, .head .idx { width: 112px; padding: 0 8px; background: #f0f2f6; color: #86868d; }
.row .idx.cut { text-align: left; }
.c-a { width: 86px; }
.c-min { width: 102px; }
.c-max { width: 96px; }
.c-mid { width: 152px; }
.c-sum { width: 104px; }
footer { margin-top: 168px; font: 12.500px/20px "Open Sans", sans-serif; color: #aeaeb2; letter-spacing: -.1px; }
footer b { font-weight: 400; color: #808084; }
.burger { margin: 20px 0 0 535px; }
.scrollbar { width: 6px; margin-left: auto; background: #d3d3d4; display: flex; align-items: flex-end; }
.thumb { width: 6px; height: 299px; border-radius: 3px 3px 0 0; background: #8f8e93; }
```
